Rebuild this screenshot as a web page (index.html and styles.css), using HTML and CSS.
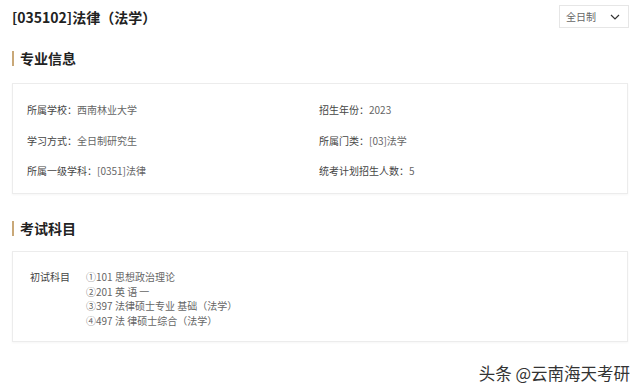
FILE: index.html
```html
<!DOCTYPE html>
<html lang="zh">
<head>
<meta charset="utf-8">
<link rel="stylesheet" href="styles.css">
</head>
<body>
<div class="page">
  <header class="top">
    <h1 class="title">[035102]法律（法学）</h1>
    <div class="select">
      <span>全日制</span>
      <svg class="chev" width="10" height="6" viewBox="0 0 10 6"><polyline points="1,1 5,5 9,1" fill="none" stroke="#333" stroke-width="1.2"/></svg>
    </div>
  </header>

  <h2 class="sec sec1">专业信息</h2>
  <section class="card info">
    <div class="item"><span class="lab">所属学校：</span>西南林业大学</div>
    <div class="item"><span class="lab">招生年份：</span>2023</div>
    <div class="item"><span class="lab">学习方式：</span>全日制研究生</div>
    <div class="item"><span class="lab">所属门类：</span>[03]法学</div>
    <div class="item"><span class="lab">所属一级学科：</span>[0351]法律</div>
    <div class="item"><span class="lab">统考计划招生人数：</span>5</div>
  </section>

  <h2 class="sec sec2">考试科目</h2>
  <section class="card exam">
    <div class="elab">初试科目</div>
    <div class="elist">
      <div>①101 思想政治理论</div>
      <div>②201 英 语 一</div>
      <div>③397 法律硕士专业 基础（法学）</div>
      <div>④497 法 律硕士综合（法学）</div>
    </div>
  </section>

  <div class="mark">头条 @云南海天考研</div>
</div>
</body>
</html>
```

FILE: styles.css
```css
* { box-sizing: border-box; }
html, body { margin: 0; padding: 0; background: #fff; }
body {
  font-family: "Noto Sans CJK SC", "Noto Sans", sans-serif;
  color: #555;
  width: 640px;
  height: 392px;
  overflow: hidden;
}
.page { position: relative; padding: 0 12px 0 12px; height: 392px; }

.top {
  height: 34px;
  display: flex;
  align-items: center;
  justify-content: space-between;
}
.title {
  margin: 0;
  font-size: 14px;
  line-height: 20px;
  font-weight: 700;
  color: #222;
}
.select {
  width: 70px;
  height: 23px;
  margin-right: -1px;
  margin-top: -1px;
  border: 1px solid #e6e6e6;
  display: flex;
  align-items: center;
  justify-content: space-between;
  padding: 0 8px 0 6px;
  font-size: 10px;
  color: #666;
}
.chev { display: block; }

.sec {
  margin: 0;
  font-size: 14px;
  line-height: 20px;
  font-weight: 700;
  color: #222;
  height: 20px;
  display: flex;
  align-items: center;
}
.sec::before {
  content: "";
  width: 2px;
  height: 15px;
  background: #c9a878;
  margin-right: 6px;
}
.sec1 { margin-top: 14px; }
.sec2 { margin-top: 24px; }

.card {
  border: 1px solid #ececec;
  box-shadow: 0 1px 2px rgba(0,0,0,0.04);
  background: #fff;
  width: 616px;
}
.info {
  margin-top: 15px;
  height: 111px;
  display: grid;
  grid-template-columns: 292px 1fr;
  row-gap: 16.5px;
  padding: 19px 0 15px 14px;
  font-size: 10px;
  line-height: 14px;
}
.item { white-space: nowrap; color: #666; }
.lab { color: #444; }

.exam {
  margin-top: 13px;
  height: 91px;
  display: flex;
  padding: 18px 0 0 17px;
  font-size: 10px;
  line-height: 14.7px;
}
.elab { width: 56px; color: #444; }
.elist { color: #666; }

.mark {
  position: absolute;
  right: 10px;
  top: 362px;
  font-size: 16.5px;
  line-height: 22px;
  color: #333;
  text-shadow: 0 0 1px #fff, 0 0 2px #fff;
}
```
